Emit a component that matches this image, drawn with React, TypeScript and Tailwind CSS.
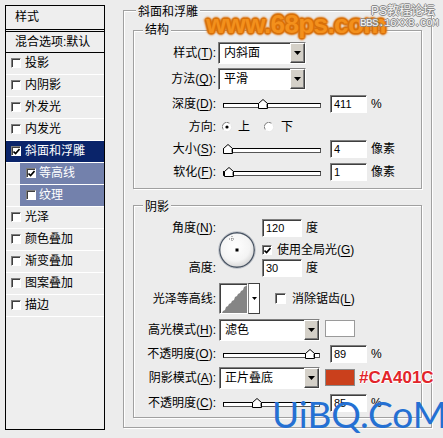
import React from "react";

const sunken =
  "border border-t-[#7f7f7f] border-l-[#7f7f7f] border-b-white border-r-white shadow-[inset_1px_1px_0_#3f3f3f]";
const raised =
  "border border-t-white border-l-white border-b-[#404040] border-r-[#404040] shadow-[inset_-1px_-1px_0_#808080]";

const U = ({ c }: { c: string }) => <span className="underline underline-offset-[2px]">{c}</span>;

function Label({ children }: { children: React.ReactNode }) {
  return <div className="w-[82px] shrink-0 text-right whitespace-nowrap">{children}</div>;
}

function Tri() {
  return (
    <svg width="7" height="4" viewBox="0 0 7 4">
      <polygon points="0,0 7,0 3.5,4" fill="#000" />
    </svg>
  );
}

function Check({ checked = false, className = "" }: { checked?: boolean; className?: string }) {
  return (
    <span className={`shrink-0 bg-white flex items-center justify-center ${sunken} ${className}`}>
      {checked && (
        <svg width="7" height="7" viewBox="0 0 7 7">
          <path d="M0.5 3.5 L2.6 5.6 L6.5 1" stroke="#000" strokeWidth="1.6" fill="none" />
        </svg>
      )}
    </span>
  );
}

function Radio({ checked = false }: { checked?: boolean }) {
  return (
    <svg width="10" height="10" viewBox="0 0 10 10" className="shrink-0">
      <circle cx="5" cy="5" r="4.5" fill="#fff" />
      <path d="M1.2 7.5 A4.5 4.5 0 0 1 7.5 1.2" stroke="#808080" strokeWidth="1" fill="none" />
      <path d="M2.5 8.8 A4.5 4.5 0 0 0 8.8 2.5" stroke="#e8e8e8" strokeWidth="1" fill="none" />
      {checked && <circle cx="5" cy="5" r="1.6" fill="#000" />}
    </svg>
  );
}

function Select({ value, className = "" }: { value: string; className?: string }) {
  return (
    <div className={`flex bg-white ${sunken} ${className}`}>
      <div className="flex-1 pl-[5px] flex items-center whitespace-nowrap">{value}</div>
      <div className={`w-[15px] bg-[#D4D0C8] flex items-center justify-center ${raised}`}>
        <Tri />
      </div>
    </div>
  );
}

function Field({ v, className = "" }: { v: string; className?: string }) {
  return (
    <div className={`h-[18px] bg-white pl-[3px] flex items-center text-[11px] ${sunken} ${className}`}>{v}</div>
  );
}

function Slider({ pos, className = "" }: { pos: number; className?: string }) {
  return (
    <div className={`relative h-[10px] ${className}`}>
      <div className="absolute left-0 right-0 top-[4px] h-[5px] bg-white border border-t-black border-l-black border-b-[#555] border-r-[#555]" />
      <svg width="10" height="10" viewBox="0 0 10 10" className="absolute top-0" style={{ left: pos }}>
        <polygon points="5,0.5 9.5,4.5 9.5,9.5 0.5,9.5 0.5,4.5" fill="#fff" stroke="#000" strokeWidth="1" />
        <line x1="8.5" y1="5" x2="8.5" y2="8.5" stroke="#999" />
      </svg>
    </div>
  );
}

function Group({
  title,
  className = "",
  titleCls = "",
  children,
}: {
  title: string;
  className?: string;
  titleCls?: string;
  children?: React.ReactNode;
}) {
  return (
    <div
      className={`relative shrink-0 flex flex-col border border-[#A0A0A0] shadow-[1px_1px_0_#fff,inset_1px_1px_0_#fff] ${className}`}
    >
      <span className={`absolute px-[2px] bg-[#ECECEC] leading-[16px] whitespace-nowrap ${titleCls}`}>{title}</span>
      {children}
    </div>
  );
}

function AngleDial() {
  return (
    <svg width="38" height="38" viewBox="0 0 38 38">
      <defs>
        <radialGradient id="dialg" cx="45%" cy="40%" r="60%">
          <stop offset="0" stopColor="#ffffff" />
          <stop offset="0.7" stopColor="#f4f4f4" />
          <stop offset="1" stopColor="#d8d8d8" />
        </radialGradient>
      </defs>
      <circle cx="19" cy="19" r="17.3" fill="url(#dialg)" stroke="#4a5564" strokeWidth="1.4" />
      <circle cx="19" cy="19" r="18.4" fill="none" stroke="#b8bcc4" strokeWidth="0.8" />
      <path d="M14 5 V11 M11 8 H17" stroke="#555" strokeWidth="0.8" strokeDasharray="1 1" />
      <rect x="17.5" y="17.5" width="3" height="3" fill="#000" />
    </svg>
  );
}

function Contour() {
  return (
    <div className="flex h-[31px] ml-[3px]">
      <div className={`w-[29px] h-[31px] bg-white ${sunken}`}>
        <svg width="27" height="29" viewBox="0 0 27 29">
          <path
            d="M2 29 L3 27 L5 26 L6 23 L8 22 L9 20 L11 19 L12 17 L14 16 L15 13 L17 12 L18 10 L20 9 L21 7 L23 6 L24 3 L26 2 L27 1 L27 29 Z"
            fill="#858585"
          />
        </svg>
      </div>
      <div className="w-[12px] h-[31px] bg-white border border-[#404040] border-l-[#808080] flex items-center justify-center">
        <svg width="5" height="3" viewBox="0 0 5 3">
          <polygon points="0,0 5,0 2.5,3" fill="#000" />
        </svg>
      </div>
    </div>
  );
}

const items: { t: string; sel?: boolean; sub?: boolean; checked?: boolean }[] = [
  { t: "投影" },
  { t: "内阴影" },
  { t: "外发光" },
  { t: "内发光" },
  { t: "斜面和浮雕", sel: true, checked: true },
  { t: "等高线", sub: true, checked: true },
  { t: "纹理", sub: true },
  { t: "光泽" },
  { t: "颜色叠加" },
  { t: "渐变叠加" },
  { t: "图案叠加" },
  { t: "描边" },
];

function LeftPanel() {
  return (
    <div className="ml-[5px] mt-[5px] w-[100px] h-[425px] shrink-0 border border-black bg-[#EEEEEE] flex flex-col">
      <div className="h-[26px] shrink-0 pl-[9px] pb-[2px] flex items-center border-b-[3px] border-double border-black">
        样式
      </div>
      <div className="h-[21px] shrink-0 pl-[9px] flex items-center border-b border-black whitespace-nowrap">
        混合选项:默认
      </div>
      {items.map((it) => (
        <div key={it.t} className="h-[22px] shrink-0 border-b border-white flex">
          {it.sub ? (
            <div className="ml-[14px] flex-1 bg-[#7381AC] text-white flex items-center pl-[6px] gap-[2px] pb-[1px]">
              <Check checked={it.checked} className="w-[10px] h-[10px]" />
              <span className="ml-[1px]">{it.t}</span>
            </div>
          ) : (
            <div
              className={`flex-1 flex items-center pl-[5px] gap-[4px] pb-[1px] whitespace-nowrap ${
                it.sel ? "bg-[#0A246A] text-white" : ""
              }`}
            >
              <Check checked={it.checked} className="w-[10px] h-[10px]" />
              <span>{it.t}</span>
            </div>
          )}
        </div>
      ))}
    </div>
  );
}

function RightPane() {
  return (
    <Group title="斜面和浮雕" className="ml-[18px] mt-[10px] w-[309px] h-[418px]" titleCls="left-[12px] top-[-7px]">
      <Group title="结构" className="ml-[9px] mt-[19px] w-[289px] h-[159px]" titleCls="left-[9px] top-[-9px]">
        <div className="flex items-center h-[22px] mt-[11px]">
          <Label>
            样式(<U c="T" />):
          </Label>
          <Select value="内斜面" className="ml-[2px] w-[88px] h-[22px]" />
        </div>
        <div className="flex items-center h-[22px] mt-[4px]">
          <Label>
            方法(<U c="Q" />):
          </Label>
          <Select value="平滑" className="ml-[2px] w-[88px] h-[22px]" />
        </div>
        <div className="flex items-center h-[18px] mt-[5px]">
          <Label>
            深度(<U c="D" />):
          </Label>
          <Slider pos={35} className="ml-[7px] w-[98px]" />
          <Field v="411" className="ml-[9px] w-[37px]" />
          <span className="ml-[4px]">%</span>
        </div>
        <div className="flex items-center h-[18px] mt-[5px]">
          <Label>方向:</Label>
          <span className="ml-[6px] flex">
            <Radio checked />
          </span>
          <span className="ml-[6px]">上</span>
          <span className="ml-[14px] flex">
            <Radio />
          </span>
          <span className="ml-[7px]">下</span>
        </div>
        <div className="flex items-center h-[18px] mt-[4px]">
          <Label>
            大小(<U c="S" />):
          </Label>
          <Slider pos={0} className="ml-[7px] w-[98px]" />
          <Field v="4" className="ml-[9px] w-[37px]" />
          <span className="ml-[4px]">像素</span>
        </div>
        <div className="flex items-center h-[18px] mt-[5px]">
          <Label>
            软化(<U c="F" />):
          </Label>
          <Slider pos={1} className="ml-[7px] w-[98px]" />
          <Field v="1" className="ml-[9px] w-[37px]" />
          <span className="ml-[4px]">像素</span>
        </div>
      </Group>

      <Group title="阴影" className="ml-[9px] mt-[16px] w-[289px] h-[213px]" titleCls="left-[9px] top-[-7px]">
        <div className="flex mt-[13px] h-[58px] shrink-0">
          <div className="w-[82px] shrink-0 flex flex-col justify-between">
            <div className="h-[18px] flex items-center justify-end">
              角度(<U c="N" />):
            </div>
            <div className="h-[18px] flex items-center justify-end">高度:</div>
          </div>
          <div className="ml-[2px] mt-[12px]">
            <AngleDial />
          </div>
          <div className="ml-[6px] flex flex-col">
            <div className="flex items-center">
              <Field v="120" className="w-[40px]" />
              <span className="ml-[4px]">度</span>
            </div>
            <div className="flex items-center mt-[7px] h-[12px]">
              <Check checked className="w-[10px] h-[10px]" />
              <span className="ml-[5px] whitespace-nowrap">
                使用全局光(<U c="G" />)
              </span>
            </div>
            <div className="flex items-center mt-[3px]">
              <Field v="30" className="w-[40px]" />
              <span className="ml-[4px]">度</span>
            </div>
          </div>
        </div>
        <div className="flex items-center mt-[6px] h-[31px]">
          <Label>光泽等高线:</Label>
          <Contour />
          <Check className="ml-[15px] w-[11px] h-[11px]" />
          <span className="ml-[6px] whitespace-nowrap">
            消除锯齿(<U c="L" />)
          </span>
        </div>
        <div className="flex items-start mt-[5px] h-[22px]">
          <div className="h-[22px] flex items-center">
            <Label>
              高光模式(<U c="H" />):
            </Label>
          </div>
          <Select value="滤色" className="ml-[3px] w-[101px] h-[22px]" />
          <div className="ml-[5px] mt-[1px] w-[30px] h-[17px] bg-white border border-[#9a9a9a]" />
        </div>
        <div className="flex items-center mt-[4px] h-[18px]">
          <Label>
            不透明度(<U c="O" />):
          </Label>
          <Slider pos={82} className="ml-[7px] w-[97px]" />
          <Field v="89" className="ml-[10px] w-[37px]" />
          <span className="ml-[4px]">%</span>
        </div>
        <div className="flex items-start mt-[4px] h-[22px]">
          <div className="h-[22px] flex items-center">
            <Label>
              阴影模式(<U c="A" />):
            </Label>
          </div>
          <Select value="正片叠底" className="ml-[3px] w-[101px] h-[22px]" />
          <div className="ml-[5px] mt-[2px] w-[30px] h-[17px] bg-[#CA401C] border border-[#8a8a8a]" />
        </div>
        <div className="flex items-center mt-[5px] h-[18px]">
          <Label>
            不透明度(<U c="C" />):
          </Label>
          <Slider pos={29} className="ml-[7px] w-[97px]" />
          <Field v="85" className="ml-[10px] w-[37px]" />
          <span className="ml-[4px]">%</span>
        </div>
      </Group>
    </Group>
  );
}

export default function App() {
  return (
    <div className="relative w-[443px] h-[438px] overflow-hidden bg-[#ECECEC] text-[12px] leading-[16px] text-black font-['Liberation_Sans','Noto_Sans_CJK_SC',sans-serif] flex items-start">
      <LeftPanel />
      <RightPane />

      <div className="absolute left-[206px] top-[11px] text-[26px] leading-none font-bold tracking-[-0.6px] text-[#F3901C] font-['Liberation_Sans',sans-serif] [-webkit-text-stroke:2px_#fff] [paint-order:stroke_fill] [text-shadow:1px_1px_1px_#D8700A,-1px_-1px_1px_#D8700A,1px_-1px_1px_#D8700A,-1px_1px_1px_#D8700A,0_2px_2px_#D8700A,2px_0_2px_#D8700A,-2px_0_2px_#D8700A,0_-2px_2px_#D8700A]">
        www.68ps.com
      </div>
      <div className="absolute left-[371px] top-[4px] text-[12px] leading-[14px] text-[#f4f4f4] [text-shadow:1px_0_#888,-1px_0_#888,0_1px_#888,0_-1px_#888]">
        PS教程论坛
      </div>
      <div className="absolute left-[360px] top-[17px] text-[11px] leading-[12px] tracking-[-0.6px] text-[#f4f4f4] font-['Liberation_Mono',monospace] [text-shadow:1px_0_#888,-1px_0_#888,0_1px_#888,0_-1px_#888]">
        BBS.16XX8.COM
      </div>
      <div className="absolute left-[359px] top-[368px] text-[17px] leading-[20px] font-bold text-[#E2252B] font-['Liberation_Sans',sans-serif] [text-shadow:1px_0_#fff,-1px_0_#fff,0_1px_#fff,0_-1px_#fff]">
        #CA401C
      </div>
      <div className="absolute left-[272px] top-[395px] text-[37px] leading-none text-[#2470D3] font-['Lato',sans-serif]">
        UiBQ.CoM
      </div>
    </div>
  );
}
